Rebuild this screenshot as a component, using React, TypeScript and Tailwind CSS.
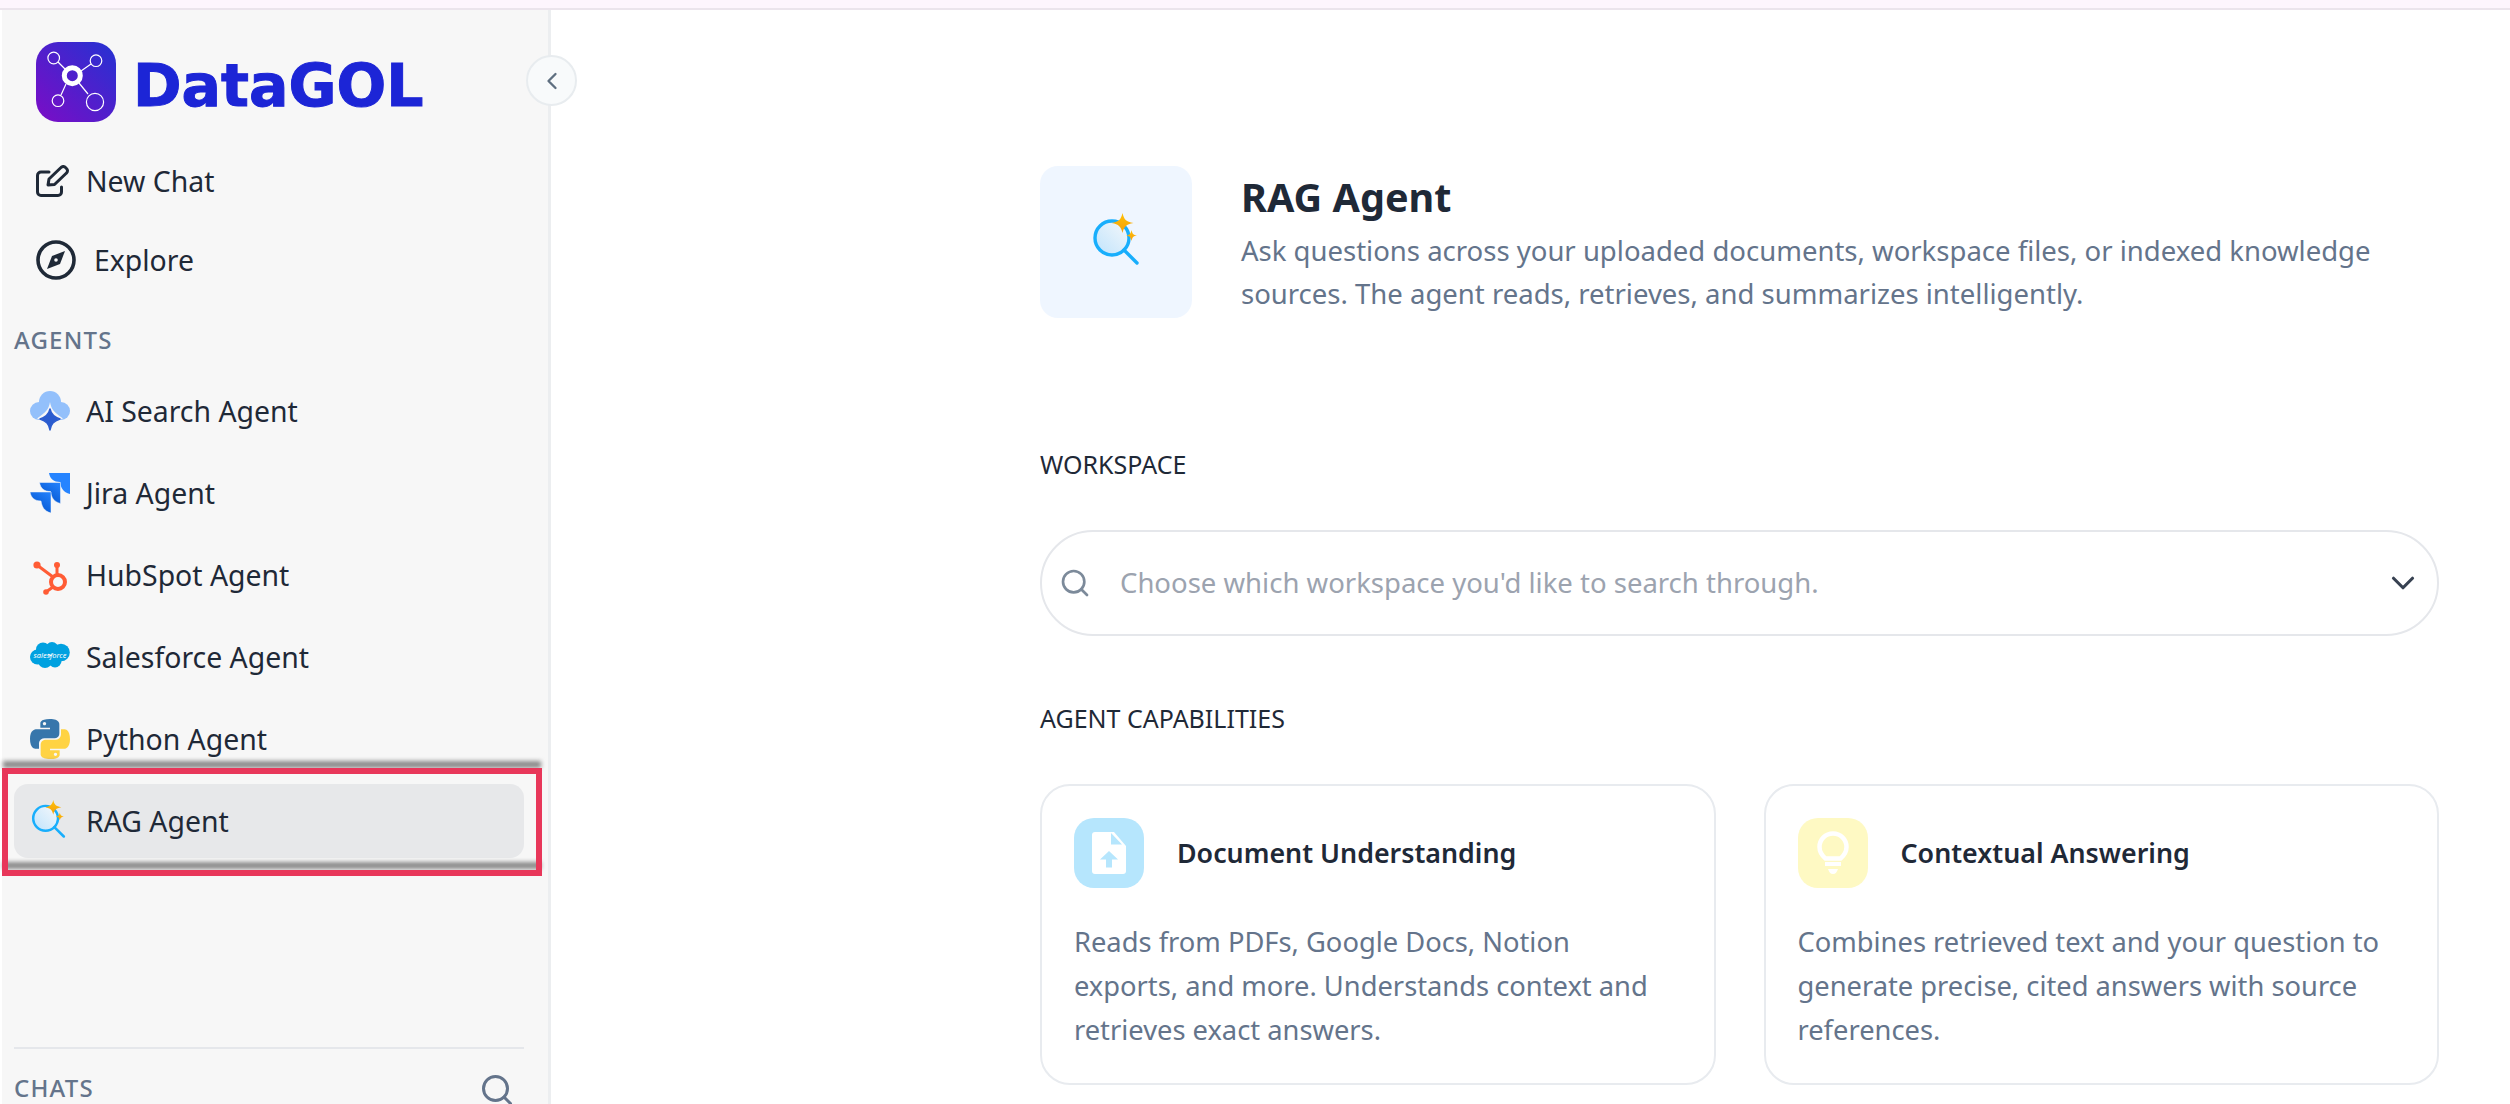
import { ChevronDown, ChevronLeft, Search } from "lucide-react";

const font = "font-['Noto_Sans',sans-serif]";

export default function App() {
    return (
        <div className={`relative h-[1104px] w-[2510px] overflow-hidden bg-white ${font}`}>
            <div className="h-[10px] border-b-2 border-[#ebe4ec] bg-[#fdf5fd]"></div>
            <div className="flex h-[1094px]">
                <Sidebar />
                <Main />
            </div>

            {/* collapse button sits over the sidebar edge */}
            <div className="absolute left-[526px] top-[55px] flex h-[51px] w-[51px] items-center justify-center rounded-full border-2 border-[#e8ecef] bg-[#f8fafb]">
                <ChevronLeft size={28} strokeWidth={2} className="text-[#5f6f80]" />
            </div>

            {/* annotation drawn on the screenshot */}
            <div className="absolute left-[3px] top-[761px] h-[108px] w-[538px] border-y-[7px] border-[#8a8a8a] blur-[2px]"></div>
            <div className="absolute left-[2px] top-[768px] h-[108px] w-[540px] border-[6px] border-[#e8375a]"></div>
        </div>
    );
}

function Sidebar() {
    return (
        <aside className="ml-[2px] flex h-full w-[549px] flex-col border-r-[3px] border-[#eceef0] bg-[#f7f7f7] pl-[12px] pr-[24px]">
            <div className="ml-[22px] mt-[32px] flex h-[80px] items-center gap-[17px]">
                <LogoIcon />
                <span className="mt-[8px] font-['DejaVu_Sans',sans-serif] text-[58.5px] font-bold leading-none text-[#1c25d6] [-webkit-text-stroke:1px_#1c25d6]">
                    DataGOL
                </span>
            </div>

            <div className="mt-[22px] flex h-[74px] items-center gap-[16px] px-[22px] text-[28.4px] text-[#1f2937]">
                <PenIcon />
                <span>New Chat</span>
            </div>
            <div className="mt-[5px] flex h-[74px] items-center gap-[18px] px-[22px] text-[28.4px] text-[#1f2937]">
                <CompassIcon />
                <span>Explore</span>
            </div>

            <div className="mt-[28px] h-[30px] text-[24px] font-medium leading-[30px] tracking-[0.05em] text-[#64748b]">
                AGENTS
            </div>

            <div className="mt-[19px] flex flex-col gap-[8px]">
                <AgentRow label="AI Search Agent" icon={<CloudIcon />} />
                <AgentRow label="Jira Agent" icon={<JiraIcon />} />
                <AgentRow label="HubSpot Agent" icon={<HubspotIcon />} />
                <AgentRow label="Salesforce Agent" icon={<SalesforceIcon />} />
                <AgentRow label="Python Agent" icon={<PythonIcon />} />
                <AgentRow label="RAG Agent" active icon={<RagIcon className="mr-[3px] mt-[-4px] h-[38px] w-[35px]" />} />
            </div>

            <div className="mt-auto border-t-2 border-[#e5e7eb] pt-[23px]">
                <div className="flex h-[32px] items-center justify-between pr-[9px] text-[24px] font-medium tracking-[0.05em] text-[#64748b]">
                    <span>CHATS</span>
                    <Search size={36} strokeWidth={2} className="mt-[4px]" />
                </div>
            </div>
        </aside>
    );
}

function AgentRow({ label, icon, active }: { label: string; icon: React.ReactNode; active?: boolean }) {
    return (
        <div
            className={`flex h-[74px] items-center gap-[16px] rounded-[14px] pl-[16px] text-[28.4px] text-[#1f2937] ${
                active ? "bg-[#e7e8ea]" : ""
            }`}
        >
            <div className="flex h-[40px] w-[40px] shrink-0 items-center justify-center">{icon}</div>
            <span>{label}</span>
        </div>
    );
}

function Main() {
    return (
        <main className="ml-[489px] w-[1399px] pt-[156px]">
            <div className="flex items-start gap-[49px]">
                <div className="flex h-[152px] w-[152px] shrink-0 items-center justify-center rounded-[18px] bg-[#eff6ff]">
                    <RagIcon className="mt-[-6px] h-[52px] w-[48px]" />
                </div>
                <div className="pt-[5px]">
                    <h1 className="text-[39.6px] font-bold leading-[52px] text-[#1f2937]">RAG Agent</h1>
                    <p className="mt-[6px] text-[27.5px] leading-[43px] text-[#64748b]">
                        Ask questions across your uploaded documents, workspace files, or indexed knowledge
                        <br />
                        sources. The agent reads, retrieves, and summarizes intelligently.
                    </p>
                </div>
            </div>

            <div className="mt-[130px] h-[32px] text-[25px] leading-[32px] text-[#1f2937]">WORKSPACE</div>

            <div className="mt-[50px] flex h-[106px] items-center rounded-full border-2 border-[#e5e7eb] pl-[17px] pr-[15px]">
                <Search size={32} strokeWidth={2} className="text-[#7c8a9a]" />
                <span className="ml-[29px] mt-[-1px] flex-1 text-[27.5px] text-[#9ca3af]">
                    Choose which workspace you'd like to search through.
                </span>
                <ChevronDown size={38} strokeWidth={2} className="text-[#374151]" />
            </div>

            <div className="mt-[66px] h-[32px] text-[25px] leading-[32px] text-[#1f2937]">AGENT CAPABILITIES</div>

            <div className="mt-[50px] grid grid-cols-2 gap-[48px]">
                <Card
                    title="Document Understanding"
                    tile="bg-[#b6e6fd]"
                    icon={<DocIcon />}
                    lines={[
                        "Reads from PDFs, Google Docs, Notion",
                        "exports, and more. Understands context and",
                        "retrieves exact answers.",
                    ]}
                />
                <Card
                    title="Contextual Answering"
                    tile="bg-[#fef9c3]"
                    icon={<BulbIcon />}
                    lines={[
                        "Combines retrieved text and your question to",
                        "generate precise, cited answers with source",
                        "references.",
                    ]}
                />
            </div>
        </main>
    );
}

function Card({ title, tile, icon, lines }: { title: string; tile: string; icon: React.ReactNode; lines: string[] }) {
    return (
        <div className="h-[301px] rounded-[30px] border-2 border-[#e8ebef] px-[32px] pt-[32px]">
            <div className="flex items-center gap-[33px]">
                <div className={`flex h-[70px] w-[70px] shrink-0 items-center justify-center rounded-[20px] ${tile}`}>
                    {icon}
                </div>
                <div className="text-[26.8px] font-semibold text-[#1f2937]">{title}</div>
            </div>
            <div className="mt-[32px] text-[27.3px] leading-[44px] text-[#64748b]">
                {lines.map((l) => (
                    <div key={l}>{l}</div>
                ))}
            </div>
        </div>
    );
}

function LogoIcon() {
    return (
        <svg viewBox="0 0 80 80" className="h-[80px] w-[80px] shrink-0">
            <defs>
                <linearGradient id="logoBg" x1="1" y1="0" x2="0" y2="1">
                    <stop offset="0" stopColor="#2432d2" />
                    <stop offset="1" stopColor="#7c0cc6" />
                </linearGradient>
            </defs>
            <rect width="80" height="80" rx="22" fill="url(#logoBg)" />
            <g stroke="#fff" strokeWidth="1.2" fill="none">
                <path d="M22 20L30 28M55 22L45 29M25 53L30 42M52 52L43 41" />
                <circle cx="17.7" cy="16" r="5.8" />
                <circle cx="60" cy="18.7" r="5.8" />
                <circle cx="22" cy="58.7" r="5.8" />
                <circle cx="59" cy="60" r="8.6" />
            </g>
            <circle cx="36.3" cy="33.7" r="8" fill="none" stroke="#fff" strokeWidth="5" />
        </svg>
    );
}

function PenIcon() {
    return (
        <svg viewBox="0 0 34 32" className="h-[32px] w-[34px] shrink-0" fill="none" stroke="#1f2937" strokeWidth="3" strokeLinecap="round" strokeLinejoin="round">
            <path d="M13 7H5a3.500 3.500 0 0 0-3.500 3.500v16.500A3.500 3.500 0 0 0 5 30.500h17a3.500 3.500 0 0 0 3.500-3.500v-5" />
            <path d="M12 20l1-6L25 2.500a3 3 0 0 1 4.500 0l1 1a3 3 0 0 1 0 4.500L18.500 19.500z" />
        </svg>
    );
}

function CompassIcon() {
    return (
        <svg viewBox="0 0 40 40" className="h-[40px] w-[40px] shrink-0">
            <circle cx="20" cy="20" r="18" fill="none" stroke="#1f2937" strokeWidth="3.6" />
            <path d="M29 11L24 24L11 29L16 16Z" fill="#1f2937" />
            <circle cx="20" cy="20" r="1.800" fill="#f7f7f7" />
        </svg>
    );
}

function CloudIcon() {
    return (
        <svg viewBox="0 0 40 40" className="h-[40px] w-[40px]">
            <g fill="#93c0fb">
                <circle cx="20" cy="11" r="11" />
                <circle cx="9" cy="20" r="9" />
                <circle cx="31" cy="20" r="9" />
            </g>
            <path d="M20 11C21.500 19 24 21 33 27.500C24 30 22 32 20 40C18 32 16 30 7 27.500C16 21 18.500 19 20 11Z" fill="#f7f7f7" />
            <path d="M20 18C21 23 23.500 26 30 28C23.500 30 21 33 20 39C19 33 16.500 30 10 28C16.500 26 19 23 20 18Z" fill="#2b5ccf" stroke="#2b5ccf" strokeWidth="1.500" strokeLinejoin="round" />
        </svg>
    );
}

function JiraIcon() {
    const mark = "M0 0H21V21C14 19 12 15 11 9C5 9 1 6 0 0Z";
    return (
        <svg viewBox="0 0 40 40" className="h-[40px] w-[40px]">
            <defs>
                <linearGradient id="jiraG" x1="1" y1="0" x2="0.3" y2="1">
                    <stop offset="0" stopColor="#2684ff" />
                    <stop offset="1" stopColor="#0052cc" />
                </linearGradient>
            </defs>
            <path d={mark} transform="translate(19 0)" fill="#2684ff" />
            <path d={mark} transform="translate(9.500 9.500)" fill="url(#jiraG)" stroke="#f7f7f7" strokeWidth="0.5" />
            <path d={mark} transform="translate(0 19)" fill="url(#jiraG)" stroke="#f7f7f7" strokeWidth="0.5" />
        </svg>
    );
}

function HubspotIcon() {
    return (
        <svg viewBox="0 0 40 40" className="h-[40px] w-[40px]">
            <g stroke="#ff5c35" fill="none" strokeWidth="3">
                <circle cx="28" cy="27" r="7" strokeWidth="4" />
                <path d="M27 10V20M7 10L23 22M16 37L23 32" />
            </g>
            <circle cx="27" cy="10" r="3" fill="#ff5c35" />
            <circle cx="7" cy="10" r="3.600" fill="#ff5c35" />
            <circle cx="16" cy="37" r="2.800" fill="#ff5c35" />
        </svg>
    );
}

function SalesforceIcon() {
    return (
        <svg viewBox="0 0 40 40" className="h-[40px] w-[40px]">
            <g fill="#00a1e0">
                <circle cx="13" cy="12.500" r="7" />
                <circle cx="22" cy="11.500" r="6.500" />
                <circle cx="31" cy="15.500" r="8.800" />
                <circle cx="7.500" cy="20" r="7.500" />
                <circle cx="15" cy="24" r="7" />
                <circle cx="25" cy="24" r="6.500" />
            </g>
            <text x="20" y="21" textAnchor="middle" fontSize="7.500" fontStyle="italic" fill="#fff" fontFamily="Noto Sans, sans-serif">
                salesforce
            </text>
        </svg>
    );
}

function PythonIcon() {
    return (
        <svg viewBox="0 0 24 24" className="h-[40px] w-[40px]">
            <path
                fill="#3776ab"
                d="M11.900 0C5.800 0 6.200 2.600 6.200 2.600l0 2.700h5.800v.8H3.900S0 5.700 0 11.900s3.400 6 3.400 6h2v-2.900s-.1-3.400 3.300-3.400h5.700s3.200.1 3.200-3.100V3.200S18.100 0 11.900 0zM8.700 1.800c.6 0 1 .5 1 1s-.5 1-1 1-1-.5-1-1 .5-1 1-1z"
            />
            <path
                fill="#ffd343"
                d="M12.100 24c6.100 0 5.700-2.600 5.700-2.600v-2.700H12v-.8h8.100S24 18.300 24 12.100s-3.400-6-3.400-6h-2V9s.1 3.400-3.300 3.400H9.600s-3.200-.1-3.200 3.100v5.300S5.900 24 12.100 24zm3.200-1.800c-.6 0-1-.5-1-1s.5-1 1-1 1 .5 1 1-.5 1-1 1z"
            />
        </svg>
    );
}

function RagIcon({ className }: { className: string }) {
    return (
        <svg viewBox="0 0 48 52" className={className}>
            <defs>
                <linearGradient id="ragLens" x1="1" y1="0" x2="0" y2="1">
                    <stop offset="0" stopColor="#f6f8fb" />
                    <stop offset="1" stopColor="#bfe3fc" />
                </linearGradient>
                <linearGradient id="ragStar" x1="0.5" y1="0" x2="0.5" y2="1">
                    <stop offset="0" stopColor="#ffc107" />
                    <stop offset="1" stopColor="#f59e0b" />
                </linearGradient>
            </defs>
            <circle cx="20" cy="25" r="17" fill="url(#ragLens)" stroke="#18aefc" strokeWidth="3.400" />
            <path d="M32 37L45 50" stroke="#18aefc" strokeWidth="3.400" strokeLinecap="round" />
            <path d="M30.500 0C32 6.500 34 8.500 41.500 10C34 11.500 32 13.500 30.500 20C29 13.500 27 11.500 19.500 10C27 8.500 29 6.500 30.500 0Z" fill="url(#ragStar)" />
            <path d="M39.500 17C40.300 20.800 41.200 21.800 45 22.500C41.200 23.200 40.300 24.200 39.500 28C38.700 24.200 37.800 23.200 34 22.500C37.800 21.800 38.700 20.800 39.500 17Z" fill="url(#ragStar)" />
        </svg>
    );
}

function DocIcon() {
    return (
        <svg viewBox="0 0 34 42" className="h-[42px] w-[34px]">
            <path d="M3 0H22L34 14V39A3 3 0 0 1 31 42H3A3 3 0 0 1 0 39V3A3 3 0 0 1 3 0Z" fill="#fff" />
            <path d="M19 1V12.500H30Z" fill="#b6e6fd" />
            <path d="M17 19L26 27.500H20V35.500H14V27.500H8Z" fill="#b6e6fd" />
        </svg>
    );
}

function BulbIcon() {
    return (
        <svg viewBox="0 0 32 44" className="h-[44px] w-[32px]">
            <path
                d="M16 2.500C8.500 2.500 2.500 8.500 2.500 16C2.500 21 5 24.500 8.500 27.500H23.500C27 24.500 29.500 21 29.500 16C29.500 8.500 23.500 2.500 16 2.500Z"
                fill="none"
                stroke="#fff"
                strokeWidth="4.500"
            />
            <rect x="8" y="31" width="16" height="4" fill="#fff" />
            <path d="M11 38H21C20 41 18.500 43 16 43C13.500 43 12 41 11 38Z" fill="#fff" />
        </svg>
    );
}
